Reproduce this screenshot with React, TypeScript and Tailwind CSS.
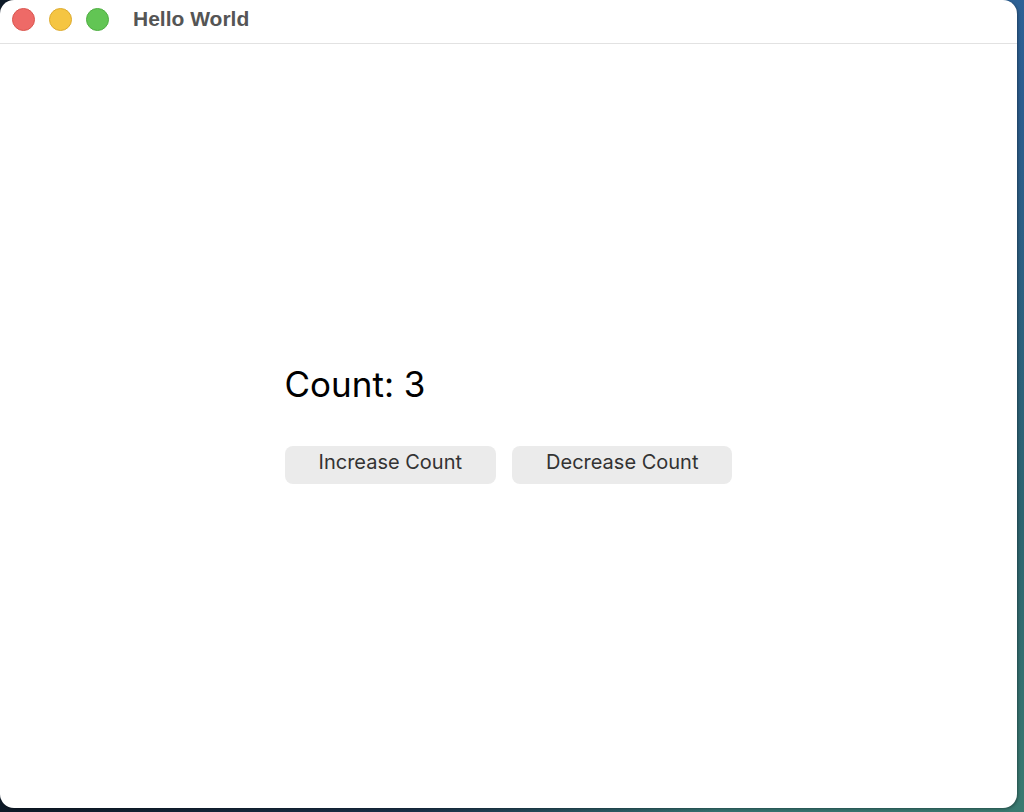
import { useState } from "react"

function TrafficLights() {
  return (
    <div className="flex items-center gap-[14px]">
      <span className="block w-[23px] h-[23px] rounded-full bg-[#ee6a67] border border-[#d9564f]" />
      <span className="block w-[23px] h-[23px] rounded-full bg-[#f5c542] border border-[#dcaa2f]" />
      <span className="block w-[23px] h-[23px] rounded-full bg-[#62c554] border border-[#4fae42]" />
    </div>
  )
}

export default function App() {
  const [count, setCount] = useState(3)

  return (
    <div className="w-[1024px] h-[812px] overflow-hidden bg-[linear-gradient(160deg,#2f6fb0_0%,#2c5d8e_40%,#2d6470_75%,#3a7a70_100%)]">
      <div className="w-[1024px] h-[812px] bg-[linear-gradient(90deg,#0e1a28_0%,#1a3048_40%,transparent_70%)]">
        <div className="w-[1017px] h-[808px] bg-white rounded-[14px] shadow-[1px_1px_3px_rgba(0,0,0,0.35)] flex flex-col overflow-hidden">
          <div className="h-[44px] shrink-0 flex items-center pl-[12px] pb-[5px] border-b border-[#e2e2e2]">
            <TrafficLights />
            <span className="ml-[24px] text-[21px] leading-[24px] font-bold text-[#555555] font-['Liberation_Sans',Arial,sans-serif]">
              Hello World
            </span>
          </div>
          <div className="flex-1 flex items-center justify-center font-['Inter',sans-serif]">
            <div className="flex flex-col mt-[-6px]">
              <h1 className="text-[35px] leading-[44px] text-black">Count: {count}</h1>
              <div className="flex gap-[16px] mt-[40px]">
                <button
                  onClick={() => setCount(count + 1)}
                  className="h-[38px] px-[34px] pb-[6px] rounded-[8px] bg-[#ebebeb] text-[20px] text-[#333333]"
                >
                  Increase Count
                </button>
                <button
                  onClick={() => setCount(count - 1)}
                  className="h-[38px] px-[34px] pb-[6px] rounded-[8px] bg-[#ebebeb] text-[20px] text-[#333333]"
                >
                  Decrease Count
                </button>
              </div>
            </div>
          </div>
        </div>
      </div>
    </div>
  )
}
